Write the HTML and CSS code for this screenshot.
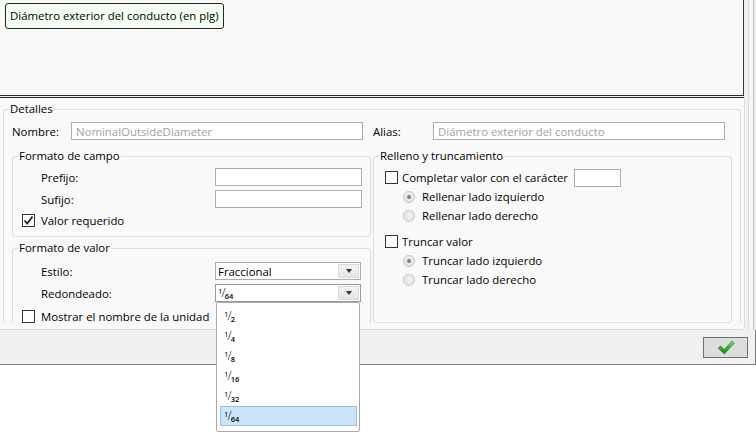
FILE: index.html
```html
<!DOCTYPE html>
<html lang="es">
<head>
<meta charset="utf-8">
<title>Detalles</title>
<link rel="stylesheet" href="styles.css">
</head>
<body>
<div class="window">
  <div class="upper">
    <div class="main-col">
      <div class="preview"></div>
      <div class="sep"></div>
      <div class="details-wrap">
        <div class="details-clip">
          <fieldset class="group details">
            <legend>Detalles</legend>
            <div class="dgrid">
              <div class="name-cell">
                <label class="nlabel">Nombre:</label>
                <input class="tb wide" value="NominalOutsideDiameter" readonly>
              </div>
              <div class="name-cell">
                <label class="nlabel alias">Alias:</label>
                <input class="tb wide" value="Diámetro exterior del conducto" readonly>
              </div>
              <div class="col">
                <fieldset class="group campo">
                  <legend>Formato de campo</legend>
                  <div class="frow first"><span class="flabel">Prefijo:</span><input class="tb field" readonly></div>
                  <div class="frow"><span class="flabel">Sufijo:</span><input class="tb field" readonly></div>
                  <div class="crow"><span class="cb"><svg width="11" height="11" viewBox="0 0 11 11"><path d="M1.5 5.5 L4.2 8.5 L9.5 1.5" fill="none" stroke="#222" stroke-width="1.8"/></svg></span><span class="ctext">Valor requerido</span></div>
                </fieldset>
                <fieldset class="group valor">
                  <legend>Formato de valor</legend>
                  <div class="frow first"><span class="flabel">Estilo:</span>
                    <div class="combo"><span class="cval">Fraccional</span><span class="cbtn"><span class="arrow"></span></span></div>
                  </div>
                  <div class="frow"><span class="flabel">Redondeado:</span>
                    <div class="combo focus"><span class="cval"><span class="frac"><span class="nu">1</span><span class="sl">/</span><span class="de">64</span></span></span><span class="cbtn"><span class="arrow"></span></span></div>
                  </div>
                  <div class="crow last"><span class="cb"></span><span class="ctext">Mostrar el nombre de la unidad</span></div>
                </fieldset>
              </div>
              <div class="col">
                <fieldset class="group relleno">
                  <legend>Relleno y truncamiento</legend>
                  <div class="rrow first"><span class="cb"></span><span class="ctext narrow">Completar valor con el carácter</span><input class="tb small" readonly></div>
                  <div class="rrow"><span class="radio"><span class="dot"></span></span><span class="rtext">Rellenar lado izquierdo</span></div>
                  <div class="rrow"><span class="radio"></span><span class="rtext">Rellenar lado derecho</span></div>
                  <div class="rrow gap"><span class="cb"></span><span class="ctext narrow">Truncar valor</span></div>
                  <div class="rrow"><span class="radio"><span class="dot"></span></span><span class="rtext">Truncar lado izquierdo</span></div>
                  <div class="rrow"><span class="radio"></span><span class="rtext">Truncar lado derecho</span></div>
                </fieldset>
              </div>
            </div>
          </fieldset>
        </div>
      </div>
    </div>
    <div class="vstrip"></div>
  </div>
  <div class="footer">
    <button class="ok" type="button" aria-label="Aceptar">
      <svg width="18" height="15" viewBox="0 0 18 15">
        <defs>
          <linearGradient id="g" x1="0" y1="0" x2="0" y2="1">
            <stop offset="0" stop-color="#7be07b"/>
            <stop offset="0.5" stop-color="#34b234"/>
            <stop offset="1" stop-color="#16801a"/>
          </linearGradient>
        </defs>
        <path d="M1 8.2 L3.6 5.8 L7.2 9.4 L15.2 0.8 L17.3 3.2 L7.4 14 Z" fill="url(#g)" stroke="#1f8a22" stroke-width="0.6" stroke-linejoin="round"/>
      </svg>
    </button>
  </div>
  <div class="below"></div>

  <div class="tooltip">Diámetro exterior del conducto (en plg)</div>

  <div class="dropdown">
    <div class="opt"><span class="frac"><span class="nu">1</span><span class="sl">/</span><span class="de">2</span></span></div>
    <div class="opt"><span class="frac"><span class="nu">1</span><span class="sl">/</span><span class="de">4</span></span></div>
    <div class="opt"><span class="frac"><span class="nu">1</span><span class="sl">/</span><span class="de">8</span></span></div>
    <div class="opt"><span class="frac"><span class="nu">1</span><span class="sl">/</span><span class="de">16</span></span></div>
    <div class="opt"><span class="frac"><span class="nu">1</span><span class="sl">/</span><span class="de">32</span></span></div>
    <div class="opt sel"><span class="frac"><span class="nu">1</span><span class="sl">/</span><span class="de">64</span></span></div>
  </div>
</div>
</body>
</html>
```

FILE: styles.css
```css
* { box-sizing: border-box; }

html, body {
  min-height: 437px;
}

body {
  margin: 0;
  background: #ffffff;
  font-family: "Open Sans", "Noto Sans", sans-serif;
  font-size: 11.4px;
  line-height: 15px;
  color: #000;
}

.window {
  position: relative;
  width: 756px;
  min-height: 437px;
}

.upper {
  display: flex;
  background: #f0f0f0;
}

.main-col {
  width: 745px;
}

.preview {
  width: 744px;
  height: 96px;
  background: #f9f9f9;
  border-right: 1px solid #3a3a3a;
  border-bottom: 1px solid #2c2c2c;
}

.sep {
  width: 744px;
  height: 2px;
  background: #f4f4f4;
  border-bottom: 1px solid #2c2c2c;
}

.details-wrap {
  height: 232px;
  background: #f9f9f9;
  border-right: 1px solid #d5dfe5;
  border-bottom: 1px solid #d5dfe5;
  border-bottom-right-radius: 4px;
}

.details-clip {
  height: 225px;
  overflow: hidden;
}

.vstrip {
  width: 11px;
  height: 330px;
  background: linear-gradient(to right,
    #efefef 0 3px, #dadada 3px 4px, #f4f4f4 4px 8px,
    #c4c4c4 8px 9px, #ececec 9px);
}

/* group boxes */
.group {
  margin: 0;
  padding: 0 5px;
  border: 1px solid #d5dfe5;
  border-radius: 3px;
  min-inline-size: 0;
}

.group > legend {
  padding: 0 1px;
  line-height: 14px;
  color: #000;
}

.details {
  margin: 4px 0 0 3px;
  width: 738px;
}

.dgrid {
  display: grid;
  grid-template-columns: 359px 359px;
  column-gap: 2px;
  row-gap: 9px;
  margin-top: 6px;
  padding: 0 3px;
}

.name-cell {
  display: flex;
  align-items: center;
  height: 18px;
}

.nlabel { width: 59px; }
.nlabel.alias { width: 60px; }

.tb {
  height: 18px;
  margin: 0;
  padding: 0 4px;
  border: 1px solid #abadb3;
  background: #fff;
  font: inherit;
  color: #a0a0a0;
  outline: none;
}

.tb.wide { width: 292px; }
.tb.field { width: 147px; }
.tb.small { width: 47px; margin-left: 6px; }

.col {
  display: flex;
  flex-direction: column;
}

.campo { padding-bottom: 7px; }
.valor { margin-top: 4px; padding-bottom: 20px; }
.relleno { height: 174px; }

.frow {
  display: flex;
  align-items: center;
  height: 18px;
  margin-top: 4px;
}
.campo .frow.first { margin-top: 5px; }
.valor .frow.first { margin-top: 7px; }

.flabel {
  width: 174px;
  margin-left: 23px;
}

.crow {
  display: flex;
  align-items: center;
  height: 18px;
  margin-top: 3px;
  padding-left: 4px;
}
.crow.last { margin-top: 5px; }

.cb {
  width: 13px;
  height: 13px;
  flex: none;
  border: 1px solid #333;
  background: #fff;
  display: flex;
  align-items: center;
  justify-content: center;
}

.ctext { margin-left: 6px; }
.ctext.narrow { margin-left: 4px; }

/* combo boxes */
.combo {
  display: flex;
  width: 146px;
  height: 18px;
  border: 1px solid #acacac;
  background: #fff;
}
.combo.focus { border-color: #9a9a9a; }

.cval {
  flex: 1;
  padding-left: 2px;
  display: flex;
  align-items: center;
  white-space: nowrap;
}

.cbtn {
  width: 21px;
  margin: 1px;
  border: 1px solid #dadada;
  background: linear-gradient(#f4f4f4, #e4e4e4);
  display: flex;
  align-items: center;
  justify-content: center;
}

.arrow {
  width: 0;
  height: 0;
  border-left: 3.5px solid transparent;
  border-right: 3.5px solid transparent;
  border-top: 4px solid #333;
}

/* fractions */
.frac {
  display: inline-flex;
  align-items: center;
  height: 14px;
}
.nu {
  font-size: 8px;
  line-height: 8px;
  align-self: flex-start;
  margin-top: 1px;
}
.sl {
  font-size: 12px;
  line-height: 14px;
  font-weight: 300;
  margin-left: -1px;
}
.de {
  font-size: 7.5px;
  line-height: 8px;
  align-self: flex-end;
  margin-left: -1px;
  font-weight: 600;
}

/* right group */
.rrow {
  display: flex;
  align-items: center;
  height: 19px;
  padding-left: 24px;
}
.rrow.first, .rrow.gap {
  padding-left: 6px;
}
.rrow.first { margin-top: 5px; }
.rrow.gap { margin-top: 7px; }

.radio {
  width: 12px;
  height: 12px;
  flex: none;
  border-radius: 50%;
  border: 1px solid #c6c6c6;
  background: radial-gradient(circle at 50% 40%, #f2f2f2, #e0e0e0);
  display: flex;
  align-items: center;
  justify-content: center;
}

.dot {
  width: 4px;
  height: 4px;
  border-radius: 50%;
  background: #7d7d7d;
}

.rtext { margin-left: 7px; }

/* footer */
.footer {
  height: 35px;
  background: #f0f0f0;
  border-right: 1px solid #7d7d7d;
  border-bottom: 1px solid #7d7d7d;
  display: flex;
  justify-content: flex-end;
  align-items: flex-start;
  padding: 7px 7px 0 0;
}

.ok {
  width: 45px;
  height: 21px;
  margin: 0;
  padding: 0;
  border: 1px solid #707070;
  background: #dddddd;
  display: flex;
  align-items: center;
  justify-content: center;
}

.below {
  height: 72px;
  background: #fff;
}

/* overlays */
.tooltip {
  position: absolute;
  left: 5px;
  top: 3px;
  height: 26px;
  padding: 0 4px;
  border: 1px solid #242424;
  border-radius: 3px;
  background: #f2fff2;
  line-height: 24px;
  white-space: nowrap;
}

.dropdown {
  position: absolute;
  left: 216px;
  top: 302px;
  width: 144px;
  height: 130px;
  padding: 3px 2px 0 3px;
  border: 1px solid #a8a8a8;
  border-radius: 2px;
  background: #fff;
}

.opt {
  height: 20px;
  padding-left: 3px;
  border: 1px solid transparent;
  display: flex;
  align-items: center;
  white-space: nowrap;
}

.opt.sel {
  background: #cce4f7;
  border-color: #8ec2ee;
}
```
